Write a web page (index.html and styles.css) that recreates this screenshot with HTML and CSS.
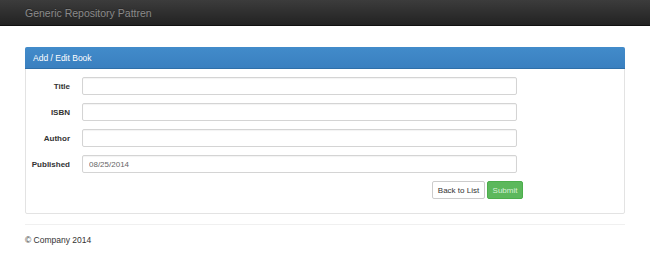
FILE: index.html
```html
<!DOCTYPE html>
<html lang="en">
<head>
  <meta charset="UTF-8" />
  <title>Generic Repository Pattren</title>
  <link rel="stylesheet" href="styles.css">
</head>
<body>
  <div class="navbar">
    <a class="brand" href="#">Generic Repository Pattren</a>
  </div>

  <div class="container">
    <div class="panel">
      <div class="panel-heading">Add / Edit Book</div>
      <form class="panel-body book-form">
        <label for="title">Title</label>
        <input type="text" id="title">

        <label for="isbn">ISBN</label>
        <input type="text" id="isbn">

        <label for="author">Author</label>
        <input type="text" id="author">

        <label for="published">Published</label>
        <input type="text" id="published" value="08/25/2014">

        <div class="actions">
          <button type="button" class="btn btn-default">Back to List</button>
          <button type="submit" class="btn btn-success">Submit</button>
        </div>
      </form>
    </div>

    <hr>
    <footer class="footer">&copy; Company 2014</footer>
  </div>
</body>
</html>
```

FILE: styles.css
```css
body {
  margin: 0;
  font-family: "Liberation Sans", Arial, sans-serif;
  background: #fff;
  color: #333;
}

.navbar {
  height: 26px;
  background: linear-gradient(to bottom, #3c3c3c, #222);
  border-bottom: 1px solid #111;
  box-sizing: border-box;
  padding: 0 25px;
  display: flex;
  align-items: center;
}

.brand {
  color: #8a8a8a;
  font-size: 10.5px;
  text-decoration: none;
  text-shadow: 0 -1px 0 rgba(0,0,0,0.25);
}

.container {
  padding: 0 25px;
}

.panel {
  margin-top: 21px;
  border: 1px solid #e3e3e3;
  border-radius: 2px;
}

.panel-heading {
  height: 22px;
  margin: -1px -1px 0;
  padding: 0 8px;
  display: flex;
  align-items: center;
  background: linear-gradient(to bottom, #428bca, #3a80c0);
  border-bottom: 1px solid #2f6fa8;
  border-radius: 2px 2px 0 0;
  color: #fff;
  font-size: 8.5px;
  box-sizing: border-box;
}

.book-form {
  display: grid;
  grid-template-columns: 44px 435px;
  column-gap: 12px;
  row-gap: 8px;
  align-items: center;
  padding: 8px 0 14px 0;
  margin: 0;
}

.book-form label {
  text-align: right;
  font-weight: bold;
  font-size: 8px;
  color: #333;
  white-space: nowrap;
}

.book-form input {
  height: 18px;
  box-sizing: border-box;
  border: 1px solid #d4d4d4;
  border-radius: 2px;
  padding: 0 6px;
  font-family: inherit;
  font-size: 8px;
  color: #666;
  box-shadow: inset 0 1px 1px rgba(0,0,0,0.05);
}

.actions {
  grid-column: 2;
  display: flex;
  justify-content: flex-end;
  gap: 2px;
  margin-right: -6px;
}

.btn {
  height: 18px;
  box-sizing: border-box;
  border: 1px solid #ccc;
  border-radius: 2px;
  padding: 0;
  font-family: inherit;
  font-size: 8px;
  white-space: nowrap;
  cursor: pointer;
}

.btn-default {
  background: #fff;
  color: #333;
  width: 53px;
}

.btn-success {
  background: #5cb85c;
  border-color: #4cae4c;
  color: #d8f0d8;
  width: 36px;
}

hr {
  margin: 10px 0 0;
  border: 0;
  border-top: 1px solid #f0f0f0;
}

.footer {
  padding-top: 10px;
  font-size: 8.5px;
  color: #333;
}
```
